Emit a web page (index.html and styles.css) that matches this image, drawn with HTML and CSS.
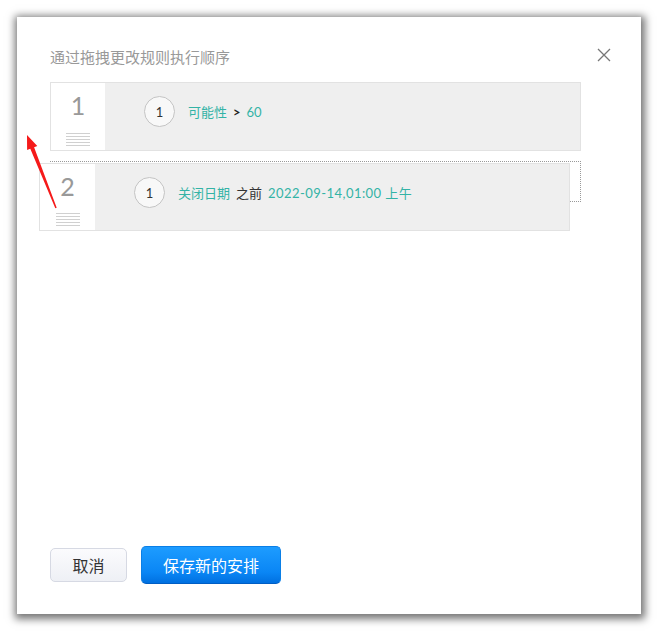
FILE: index.html
```html
<!DOCTYPE html>
<html lang="zh">
<head>
<meta charset="utf-8">
<link rel="stylesheet" href="styles.css">
</head>
<body>
<div class="dialog">
  <div class="header">
    <div class="title">通过拖拽更改规则执行顺序</div>
    <div class="close"><svg width="14" height="14" viewBox="0 0 14 14"><path d="M1 1L13 13M13 1L1 13" stroke="#777" stroke-width="1.3" fill="none"/></svg></div>
  </div>
  <div class="list">
    <div class="rule">
      <div class="handle">
        <div class="num">1</div>
        <div class="lines"><i></i><i></i><i></i><i></i><i></i></div>
      </div>
      <div class="body">
        <div class="badge">1</div>
        <div class="cond"><span class="val">可能性</span><span class="op">&gt;</span><span class="val">60</span></div>
      </div>
    </div>
    <div class="placeholder"></div>
    <div class="rule dragging">
      <div class="handle">
        <div class="num">2</div>
        <div class="lines"><i></i><i></i><i></i><i></i><i></i></div>
      </div>
      <div class="body">
        <div class="badge">1</div>
        <div class="cond"><span class="val">关闭日期</span><span class="op2">之前</span><span class="val date">2022-09-14,01:00 上午</span></div>
      </div>
    </div>
  </div>
  <div class="footer">
    <button class="btn cancel">取消</button>
    <button class="btn save">保存新的安排</button>
  </div>
</div>
<svg class="arrow" width="45" height="85" viewBox="0 0 45 85"><polygon points="7,5 17.3,16 14.1,17.3 36.7,77.7 35.3,78.3 10.3,18.7 7.1,20" fill="#f51a1a"/></svg>
</body>
</html>
```
FILE: styles.css
```css
html, body { margin: 0; padding: 0; background: #fff; }
body {
  font-family: Lato, "Noto Sans CJK SC", sans-serif;
  width: 658px; height: 632px; position: relative; overflow: hidden;
}
.dialog {
  position: absolute; left: 17px; top: 17px;
  width: 624px; height: 597px; box-sizing: border-box;
  background: #fff;
  box-shadow: 1px 2px 8px 3px rgba(0,0,0,0.55);
  padding: 30px 29px 30px 33px;
  display: flex; flex-direction: column;
}
.header { display: flex; justify-content: space-between; align-items: center; height: 20px; }
.title { font-size: 15px; line-height: 20px; color: #999; }
.close { width: 14px; height: 14px; margin-top: -4px; margin-right: 1px; }
.close svg { display: block; }
.list { position: relative; margin-top: 15px; width: 531px; }
.rule {
  display: flex; height: 69px; box-sizing: border-box;
  border: 1px solid #e2e2e2; background: #efefef;
}
.handle {
  width: 54px; background: #fff; display: flex; flex-direction: column; align-items: center;
}
.num { font-size: 25px; line-height: 30px; color: #999; margin-top: 7px; }
.lines { margin-top: auto; margin-bottom: 4px; display: flex; flex-direction: column; gap: 2px; }
.lines i { display: block; width: 24px; height: 1px; background: #d0d0d0; }
.body { flex: 1; display: flex; align-items: center; padding: 13px 0 0 39px; align-self: flex-start; }
.badge {
  width: 31px; height: 31px; box-sizing: border-box; border-radius: 50%;
  border: 1px solid #c4c4c4; background: #f8f8f8;
  display: flex; align-items: center; justify-content: center;
  font-size: 13px; color: #333;
}
.cond { margin-left: 13px; font-size: 13px; color: #333; }
.val { color: #33b3a6; }
.date { letter-spacing: 0.45px; }
.op { font-weight: bold; margin: 0 6px; color: #222; }
.op2 { margin: 0 6px; color: #333; }
.placeholder {
  margin-top: 10px; height: 41px; box-sizing: border-box;
  border: 1px dotted #999;
}
.dragging {
  position: absolute; left: -11px; top: 81px; width: 531px; height: 68px;
}
.dragging .handle { width: 55px; }
.footer { margin-top: auto; display: flex; align-items: center; gap: 14px; }
.btn {
  font-family: Lato, "Noto Sans CJK SC", sans-serif; font-size: 16px;
  border-radius: 5px; cursor: pointer; padding: 0;
}
.cancel {
  width: 77px; height: 34px; color: #333;
  background: linear-gradient(#fbfbfd, #eef0f5);
  border: 1px solid #d6d9e3;
}
.save {
  width: 140px; height: 38px; color: #fff;
  background: linear-gradient(#1d9cff, #0a86f5 70%, #0070e0);
  border: 1px solid #0a7fe6; border-bottom-color: #005ec4;
}
.arrow { position: absolute; left: 20px; top: 130px; pointer-events: none; }
```
